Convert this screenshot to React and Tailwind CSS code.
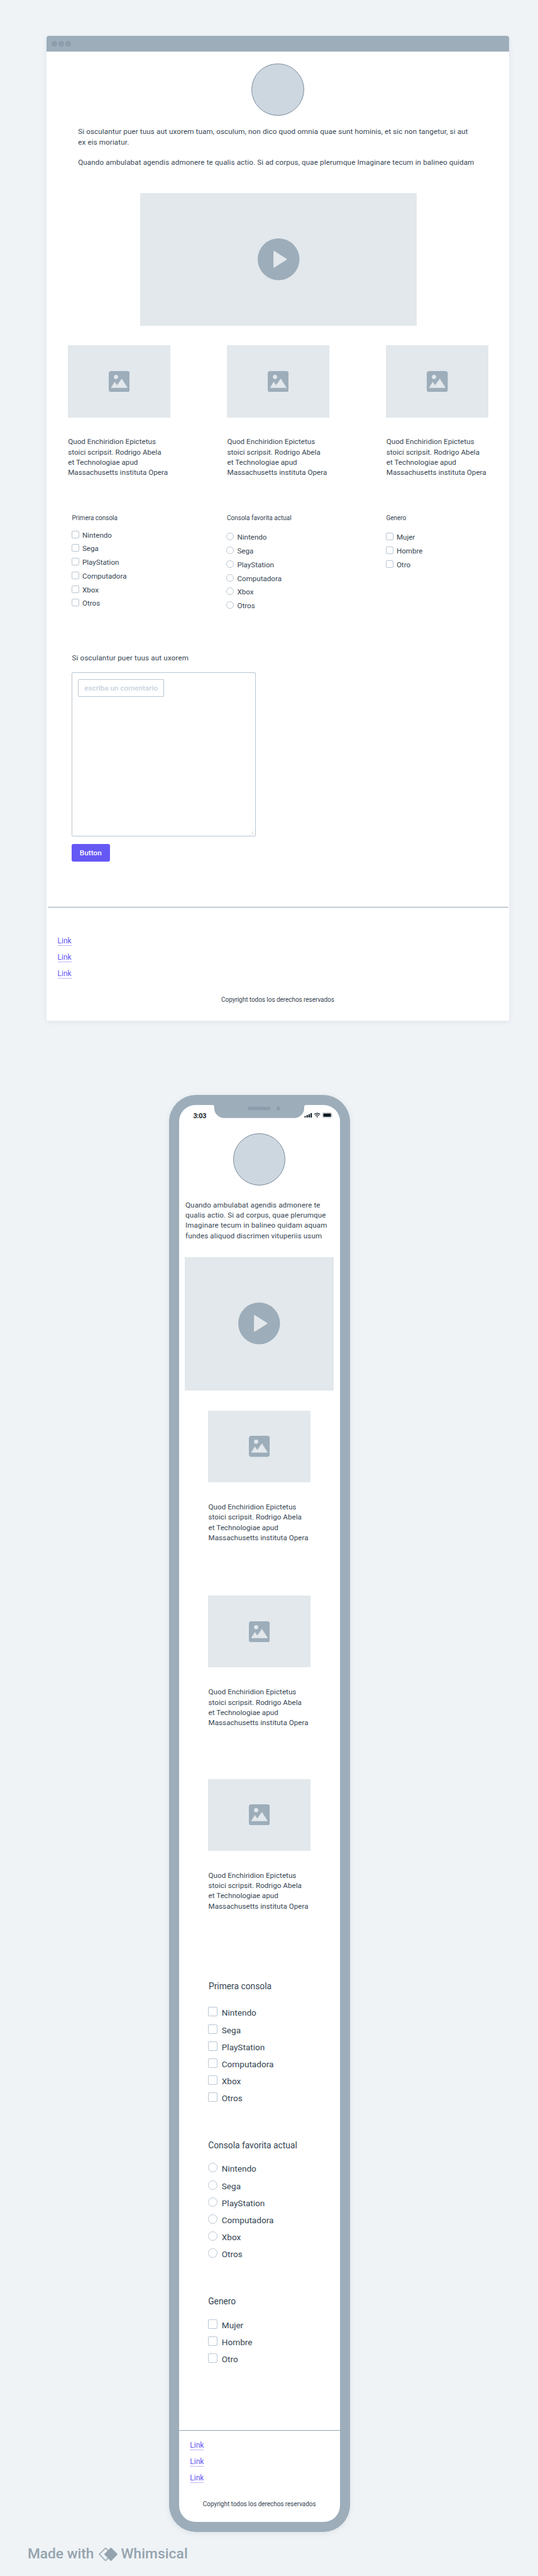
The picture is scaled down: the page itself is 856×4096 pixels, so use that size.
const CONSOLES = ["Nintendo", "Sega", "PlayStation", "Computadora", "Xbox", "Otros"];
const GENDERS = ["Mujer", "Hombre", "Otro"];
const CARD_LINES = [
  "Quod Enchiridion Epictetus",
  "stoici scripsit. Rodrigo Abela",
  "et Technologiae apud",
  "Massachusetts instituta Opera",
];

function Lines({ lines, className = "" }) {
  return (
    <p className={`text-[11.6px] leading-[16.3px] whitespace-nowrap ${className}`}>
      {lines.map((line, i) => (
        <span key={i} className="block h-[16.3px]">
          {line}
        </span>
      ))}
    </p>
  );
}

function Avatar({ className = "" }) {
  return (
    <div
      className={`h-[83.4px] w-[83.4px] shrink-0 self-center rounded-full border border-[#7a8b9b] bg-[#cdd7e0] ${className}`}
    />
  );
}

function Video({ className = "" }) {
  return (
    <div className={`flex shrink-0 items-center justify-center bg-[#e2e8ec] ${className}`}>
      <svg width="66.5" height="66.5" viewBox="0 0 98 98">
        <circle cx="49" cy="49" r="49" fill="#9dadba" />
        <path
          d="M38.5 31 L67 49 L38.5 67 Z"
          fill="#e2e8ec"
          stroke="#e2e8ec"
          strokeWidth="3"
          strokeLinejoin="round"
        />
      </svg>
    </div>
  );
}

function Picture() {
  return (
    <div className="flex h-[114.2px] w-[163.2px] shrink-0 items-center justify-center bg-[#e2e8ec]">
      <svg width="33.4" height="33.4" viewBox="0 0 24 24">
        <rect width="24" height="24" rx="2.8" fill="#9dadba" />
        <circle cx="8.3" cy="6.7" r="2.4" fill="#e2e8ec" />
        <path
          d="M2.8 19 L6.8 12.6 L9.6 16.3 L14.9 8.9 L21.3 19 Z"
          fill="#e2e8ec"
          stroke="#e2e8ec"
          strokeWidth="0.4"
          strokeLinejoin="round"
        />
      </svg>
    </div>
  );
}

function Card({ className = "" }) {
  return (
    <div className={`w-[163.2px] ${className}`}>
      <Picture />
      <Lines lines={CARD_LINES} className="mt-[30.9px] pl-[0.5px] tracking-[0.04px]" />
    </div>
  );
}

function Options({ items, round = false, large = false, className = "" }) {
  return (
    <ul className={className}>
      {items.map((item) => (
        <li
          key={item}
          className={large ? "flex h-[27.2px] items-center gap-[7.2px]" : "flex h-[21.75px] items-center gap-[5px]"}
        >
          <span
            className={`shrink-0 border border-[#b9c6d2] bg-white ${round ? "rounded-full" : "rounded-[2px]"} ${
              large ? "h-[15px] w-[15px]" : "h-[12px] w-[12px]"
            }`}
          />
          <span
            className={large ? "pt-[3px] text-[13.6px] leading-[16px]" : "pt-[2px] text-[11.6px] leading-[14px]"}
          >
            {item}
          </span>
        </li>
      ))}
    </ul>
  );
}

function FooterLinks({ className = "" }) {
  return (
    <nav className={`flex flex-col items-start gap-[10.9px] ${className}`}>
      {[0, 1, 2].map((n) => (
        <a
          key={n}
          className="border-b border-[#bdb6fb] text-[12px] leading-[14px] text-[#6656f5]"
        >
          Link
        </a>
      ))}
    </nav>
  );
}

function Copyright({ className = "" }) {
  return (
    <p className={`text-center text-[10px] leading-[16px] tracking-[-0.05px] whitespace-nowrap ${className}`}>
      Copyright todos los derechos reservados
    </p>
  );
}

function DesktopWindow() {
  return (
    <section className="ml-[74.4px] flex h-[1566px] w-[735.2px] shrink-0 flex-col rounded-t-[4px] bg-white shadow-[0_2px_8px_rgba(60,80,100,0.08)]">
      <header className="flex h-[25px] shrink-0 items-center gap-[2.5px] rounded-t-[4px] bg-[#9dadba] pl-[7.8px]">
        <span className="h-[8.5px] w-[8.5px] rounded-full bg-[#8d9dab]" />
        <span className="h-[8.5px] w-[8.5px] rounded-full bg-[#8d9dab]" />
        <span className="h-[8.5px] w-[8.5px] rounded-full bg-[#8d9dab]" />
      </header>

      <Avatar className="mt-[18.6px]" />

      <Lines
        className="mt-[17.3px] ml-[49.8px] tracking-[0.14px]"
        lines={[
          "Si osculantur puer tuus aut uxorem tuam, osculum, non dico quod omnia quae sunt hominis, et sic non tangetur, si aut",
          "ex eis moriatur.",
          "\u00a0",
          "Quando ambulabat agendis admonere te qualis actio. Si ad corpus, quae plerumque Imaginare tecum in balineo quidam",
        ]}
      />

      <Video className="mt-[40.4px] ml-[148.8px] h-[211.5px] w-[440.2px]" />

      <div className="mt-[31px] ml-[33.3px] flex gap-[90.1px]">
        <Card />
        <Card />
        <Card />
      </div>

      <div className="mt-[55.9px] ml-[39.6px] flex h-[222.6px] shrink-0 text-[10px] leading-[16px]">
        <div className="w-[246.5px]">
          <h2 className="pl-[0.5px]">Primera consola</h2>
          <Options items={CONSOLES} className="mt-[7.2px]" />
        </div>
        <div className="w-[253.4px]">
          <h2 className="pl-[0.5px]">Consola favorita actual</h2>
          <Options items={CONSOLES} round className="mt-[11px]" />
        </div>
        <div>
          <h2 className="pl-[0.5px]">Genero</h2>
          <Options items={GENDERS} className="mt-[11px]" />
        </div>
      </div>

      <div className="ml-[39.6px] flex flex-col items-start">
        <Lines lines={["Si osculantur puer tuus aut uxorem"]} className="pl-[0.5px] tracking-[0.18px]" />
        <div className="relative mt-[14.2px] h-[261.6px] w-[292.7px] rounded-[2px] border border-[#b9c6d2] pt-[10.6px] pl-[9.2px]">
          <div className="flex h-[28px] w-[137px] items-center justify-center rounded-[2px] border border-[#b9c6d2] pt-[2px] text-[11.7px] font-medium whitespace-nowrap text-[#c8d3dd]">
            escriba un comentario
          </div>
          <svg className="absolute right-[1px] bottom-[1px]" width="7" height="7" viewBox="0 0 7 7">
            <path d="M0.5 6.5 L6 0.8 M3.7 6.5 L6.3 3.8" stroke="#c8d2dc" strokeWidth="0.9" fill="none" />
          </svg>
        </div>
        <button className="mt-[11.6px] flex h-[28.3px] w-[60.7px] items-center justify-center rounded-[3px] bg-[#6558f5] pt-[2px] text-[11.8px] font-medium text-white">
          Button
        </button>
      </div>

      <div className="mt-[71.9px] mr-[1px] ml-[2px] h-px shrink-0 bg-[#92a4b2]" />
      <FooterLinks className="mt-[46.5px] ml-[17.2px]" />
      <Copyright className="mt-[25.5px]" />
    </section>
  );
}

function StatusIcons() {
  return (
    <svg className="absolute top-[11px] left-[199px]" width="46" height="10" viewBox="0 0 46 10" fill="none">
      <g fill="#16222c">
        <rect x="0.3" y="6.5" width="2.3" height="2.4" rx="0.8" />
        <rect x="3.6" y="5" width="2.3" height="3.9" rx="0.7" />
        <rect x="6.8" y="3.4" width="2.3" height="5.5" rx="0.7" />
        <rect x="10" y="1.7" width="2.3" height="7.2" rx="0.7" />
      </g>
      <g stroke="#16222c" strokeWidth="1.2">
        <path d="M16.2 4 A6.3 6.3 0 0 1 25.2 4" />
        <path d="M18 6 A3.9 3.9 0 0 1 23.4 6" />
      </g>
      <path d="M20.7 9 L19.3 7.5 A2 2 0 0 1 22.1 7.5 Z" fill="#16222c" />
      <rect x="29.2" y="1.4" width="14.6" height="7.5" rx="1.8" stroke="#b5babe" strokeWidth="0.9" />
      <rect x="30.4" y="2.5" width="12.2" height="5.3" rx="0.6" fill="#0d1820" />
      <path d="M44.7 4 Q45.6 5.1 44.7 6.3 Z" fill="#b5babe" />
    </svg>
  );
}

function Phone() {
  return (
    <section className="mt-[118px] ml-[268.6px] h-[2285.3px] w-[288.3px] shrink-0 rounded-[43px] bg-[#9dadba] p-[16.4px] shadow-[0_2px_8px_rgba(60,80,100,0.10)]">
      <div className="relative flex h-full flex-col rounded-[26px] bg-white">
        <svg className="absolute top-[-1px] left-[53px]" width="150" height="23" viewBox="0 0 150 23">
          <path
            d="M0 0 V1 Q2.6 1 2.8 4 V5.7 A16 16 0 0 0 18.8 21.7 H130 A16 16 0 0 0 146 5.7 V4 Q146.2 1 148.8 1 V0 Z"
            fill="#9dadba"
          />
          <rect x="56.3" y="3.8" width="36" height="5.4" rx="2.7" fill="#8d9dab" />
          <circle cx="105" cy="6.4" r="3.1" fill="#8d9dab" />
        </svg>
        <span className="absolute top-[12px] left-[22.4px] text-[10.8px] leading-[12px] font-bold tracking-[-0.2px] text-[#16222c]">
          3:03
        </span>
        <StatusIcons />

        <Avatar className="mt-[44.7px]" />
        <Lines
          className="mt-[22.4px] ml-[10px] tracking-[0.14px]"
          lines={[
            "Quando ambulabat agendis admonere te",
            "qualis actio. Si ad corpus, quae plerumque",
            "Imaginare tecum in balineo quidam aquam",
            "fundes aliquod discrimen vituperiis usum",
          ]}
        />
        <Video className="mt-[25.5px] ml-[9.4px] h-[212.2px] w-[236.2px]" />

        <div className="ml-[46.1px] pt-[32.2px]">
          <Card />
          <Card className="mt-[84px]" />
          <Card className="mt-[81.2px]" />
        </div>

        <div className="mt-[109.4px] ml-[45.6px] text-[13.8px] leading-[20px]">
          <h2 className="pl-[1.4px]">Primera consola</h2>
          <Options items={CONSOLES} large className="mt-[17.1px]" />
          <h2 className="mt-[52.4px] pl-[0.6px]">Consola favorita actual</h2>
          <Options items={CONSOLES} round large className="mt-[12.4px]" />
          <h2 className="mt-[53px] pl-[0.6px]">Genero</h2>
          <Options items={GENDERS} large className="mt-[12.2px]" />
        </div>

        <div className="mt-[101.1px] h-px shrink-0 bg-[#92a4b2]" />
        <FooterLinks className="mt-[16.2px] ml-[17.3px]" />
        <Copyright className="mt-[25.3px]" />
      </div>
    </section>
  );
}

function MadeWith() {
  return (
    <footer className="mt-[21px] ml-[44px] flex h-[28px] items-center text-[22.7px] font-medium text-[#95a3ae]">
      <span>Made with</span>
      <svg className="ml-[7px]" width="32" height="25" viewBox="0 0 32 25">
        <rect
          x="4.9"
          y="5.4"
          width="14.2"
          height="14.2"
          rx="0.8"
          transform="rotate(45 12 12.5)"
          fill="none"
          stroke="#a9b5be"
          strokeWidth="2"
        />
        <rect x="12.8" y="4.8" width="15.4" height="15.4" rx="1" transform="rotate(45 20.5 12.5)" fill="#95a3ae" />
      </svg>
      <span className="ml-[4px] tracking-[0.1px]">Whimsical</span>
    </footer>
  );
}

export default function App() {
  return (
    <main className="flex h-[4096px] w-[856px] flex-col overflow-hidden bg-[#eff3f6] pt-[57px] font-['Roboto','Liberation_Sans',sans-serif] text-[#364552]">
      <DesktopWindow />
      <Phone />
      <MadeWith />
    </main>
  );
}
